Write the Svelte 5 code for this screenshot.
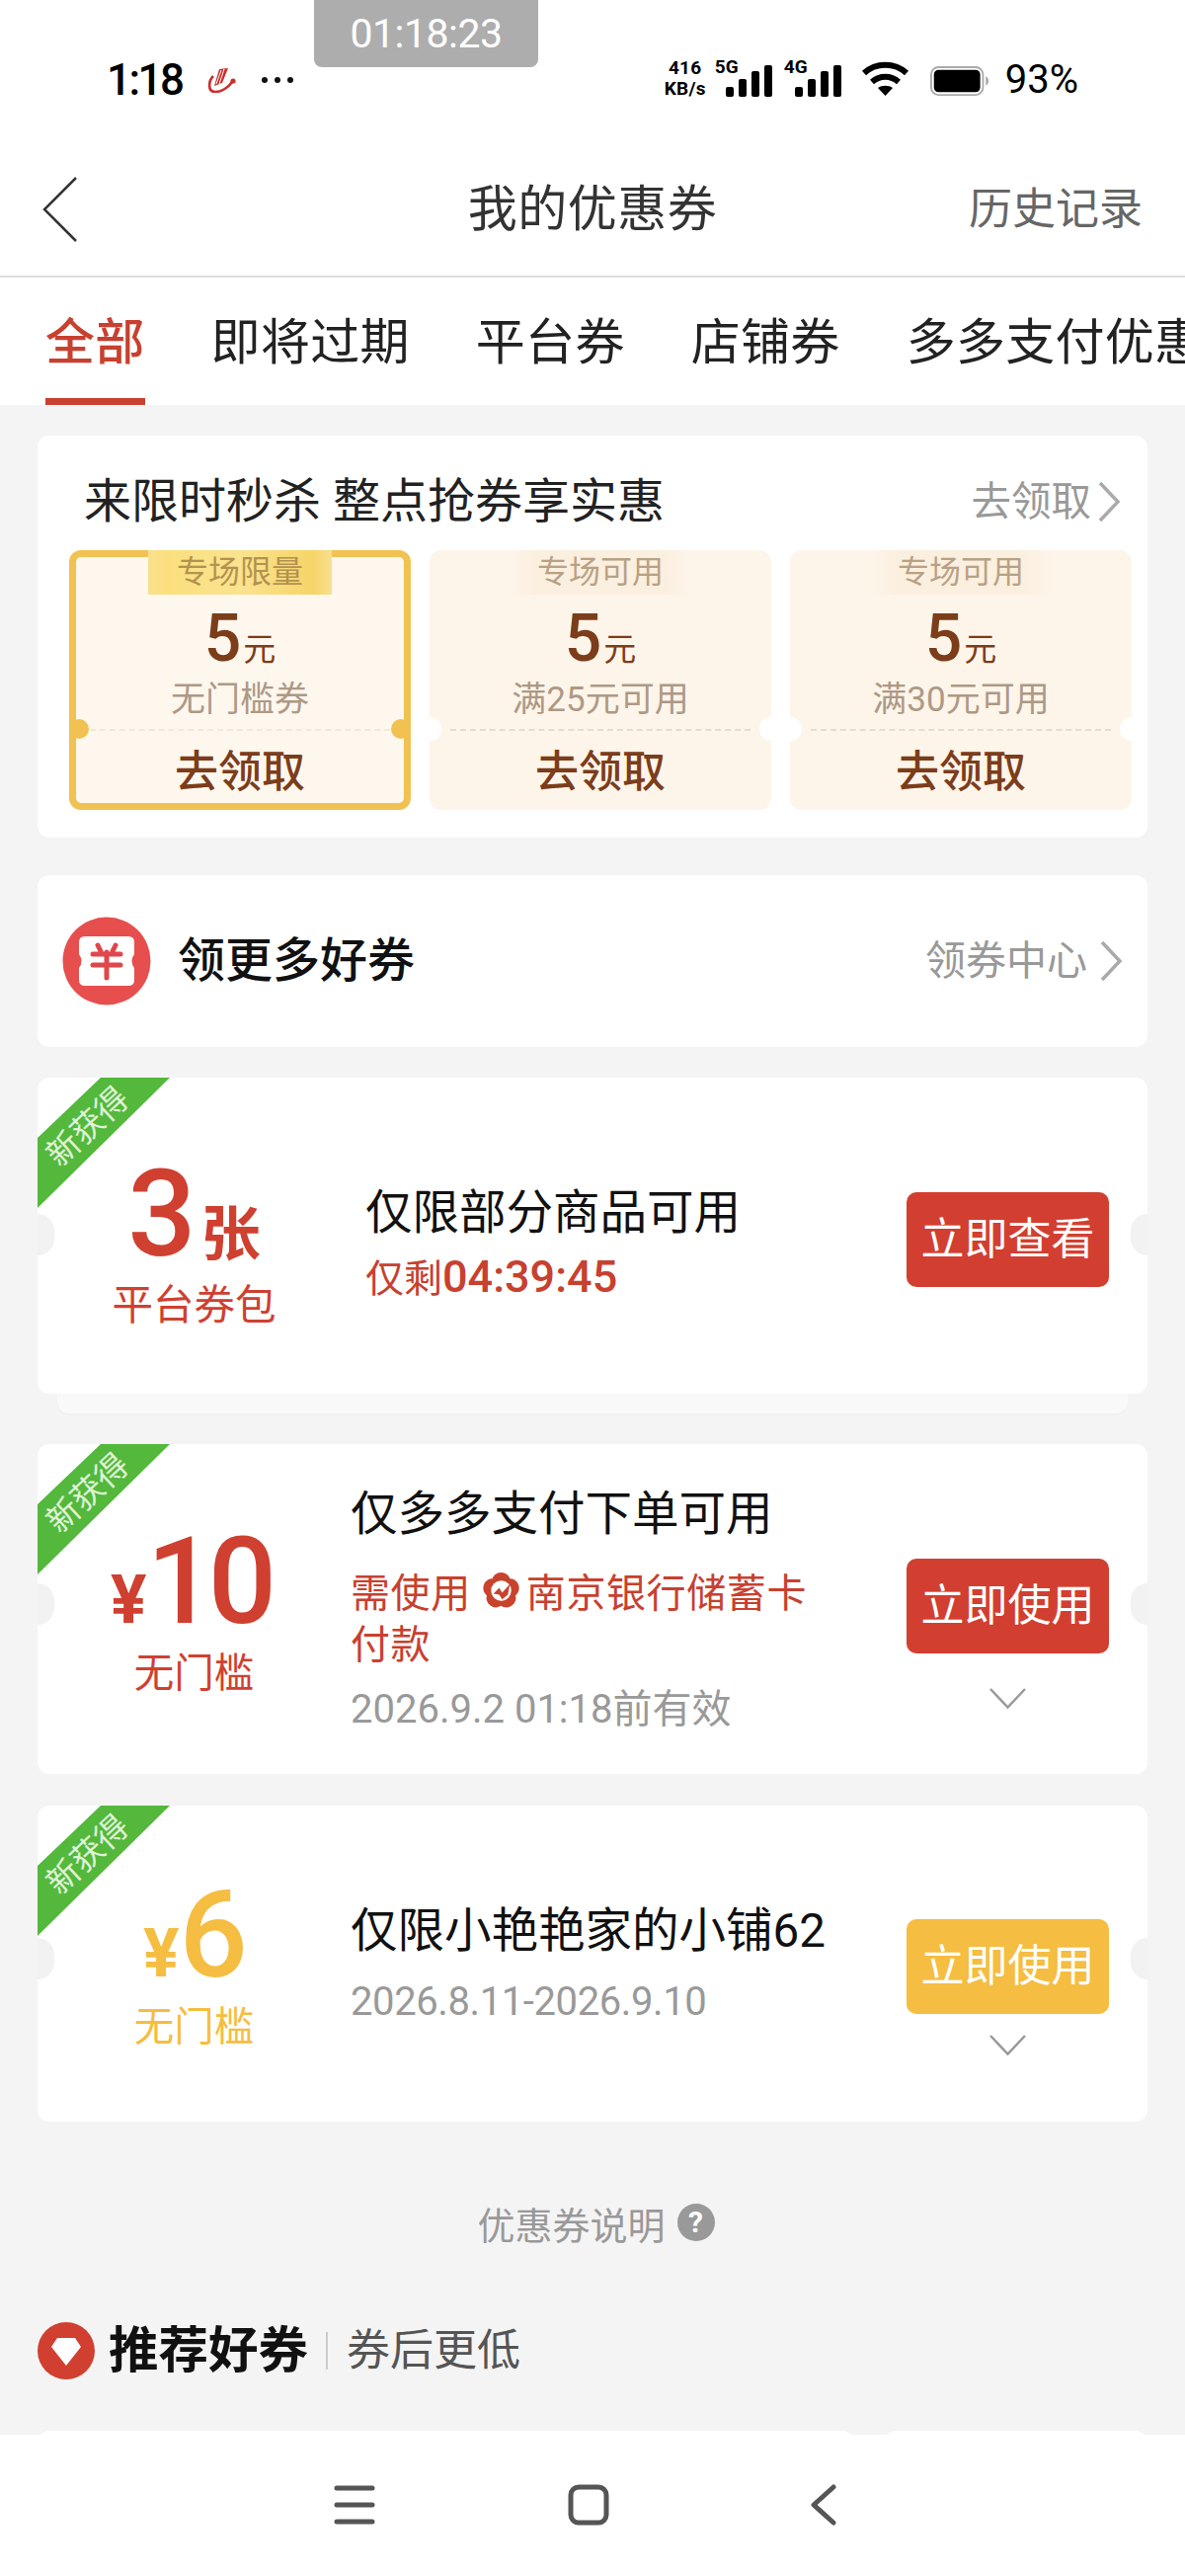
<script>
  const tabs = ["全部", "即将过期", "平台券", "店铺券", "多多支付优惠券"];

  const tickets = [
    { tag: "专场限量", label: "无门槛券", active: true },
    { tag: "专场可用", label: "满25元可用", active: false },
    { tag: "专场可用", label: "满30元可用", active: false }
  ];
</script>

{#snippet ribbon()}
  <div class="ribbon"><span>新获得</span></div>
{/snippet}

{#snippet chevronRight()}
  <svg class="chev-right" viewBox="0 0 24 42" fill="none">
    <path d="M3 2 L21 21 L3 40" stroke="#aaa" stroke-width="3.5" />
  </svg>
{/snippet}

{#snippet chevronDown()}
  <svg class="chev-down" viewBox="0 0 37 21" fill="none">
    <path d="M1 1 L18.5 19.5 L36 1" stroke="#999" stroke-width="2.5" />
  </svg>
{/snippet}

{#snippet bars()}
  <svg class="bars" viewBox="0 0 47 32">
    <rect x="0" y="22" width="8" height="10" rx="2" />
    <rect x="13" y="14" width="8" height="18" rx="2" />
    <rect x="26" y="6" width="8" height="26" rx="2" />
    <rect x="39" y="0" width="8" height="32" rx="2" />
  </svg>
{/snippet}

<div class="page">
  <!-- 状态栏 -->
  <div class="status">
    <div class="rec">01:18:23</div>
    <div class="status-left">
      <span class="time">1:18</span>
      <svg class="app-logo" viewBox="0 0 30 25" fill="none">
        <path d="M6 8 C1 13 0 24 8 24 C14 24 21 20 25 14" stroke="#c9302c" stroke-width="2.6" />
        <path d="M12 1 L21 0 L15 15 L7 18 Z" fill="#c9302c" />
        <path d="M14 2 L9 16 M17 1 L12 16" stroke="#fff" stroke-width="1" />
        <circle cx="26" cy="13" r="2.6" fill="#c9302c" />
      </svg>
      <span class="dots"><i></i><i></i><i></i></span>
    </div>
    <div class="status-right">
      <div class="speed"><span>416</span><span>KB/s</span></div>
      <div class="net"><span>5G</span>{@render bars()}</div>
      <div class="net"><span>4G</span>{@render bars()}</div>
      <svg class="wifi" viewBox="0 0 49 36" fill="none">
        <path d="M3 12 C15 1 34 1 46 12" stroke="#000" stroke-width="6" />
        <path d="M11 21 C19 14 30 14 38 21" stroke="#000" stroke-width="6" />
        <path d="M17 27 C21 24 28 24 32 27 L24.5 35 Z" fill="#000" />
      </svg>
      <svg class="battery" viewBox="0 0 64 32">
        <rect x="1" y="1" width="56" height="30" rx="8" fill="none" stroke="#aaa" stroke-width="2" />
        <rect x="4" y="4" width="50" height="24" rx="5" fill="#000" />
        <path d="M60 11 C62 12 63 14 63 16 C63 18 62 20 60 21 Z" fill="#aaa" />
      </svg>
      <span class="pct">93%</span>
    </div>
  </div>

  <!-- 标题栏 -->
  <header class="nav">
    <svg class="back" viewBox="0 0 36 66" fill="none">
      <path d="M34 1 L2 33 L34 65" stroke="#333" stroke-width="2.5" />
    </svg>
    <h1>我的优惠券</h1>
    <span class="history">历史记录</span>
  </header>

  <nav class="tabs">
    {#each tabs as tab, i}
      <span class="tab" class:on={i === 0}>{tab}</span>
    {/each}
  </nav>

  <main>
    <section class="card flash">
      <div class="flash-head">
        <span class="flash-title">来限时秒杀 整点抢券享实惠</span>
        <span class="more">去领取{@render chevronRight()}</span>
      </div>
      <div class="tickets">
        {#each tickets as t}
          <div class="ticket" class:active={t.active}>
            <div class="tag">{t.tag}</div>
            <div class="price"><b>5</b><span>元</span></div>
            <div class="cond">{t.label}</div>
            <div class="take">去领取</div>
          </div>
        {/each}
      </div>
    </section>

    <section class="card center-link">
      <svg class="ticket-icon" viewBox="0 0 90 90">
        <circle cx="45" cy="45" r="44.5" fill="#e64f4d" />
        <path d="M23 20 H67 Q73 20 73 26 V38 Q68 45 73 52 V64 Q73 70 67 70 H23 Q17 70 17 64 V52 Q22 45 17 38 V26 Q17 20 23 20 Z" fill="#fff" />
        <path d="M36 29 L39 35 M54 29 L51 35 M31 38 H59 M31 49 H59 M45 36 V62" stroke="#e0474a" stroke-width="5" stroke-linecap="round" fill="none" />
      </svg>
      <span class="center-title">领更多好券</span>
      <span class="more">领券中心{@render chevronRight()}</span>
    </section>

    <section class="coupon c1">
      {@render ribbon()}
      <div class="left red">
        <div class="amount"><b>3</b><em class="unit">张</em></div>
        <div class="label">平台券包</div>
      </div>
      <div class="mid">
        <div class="title">仅限部分商品可用</div>
        <div class="line countdown">仅剩<b>04:39:45</b></div>
      </div>
      <div class="right">
        <div class="btn">立即查看</div>
      </div>
    </section>
    <div class="stacked"></div>

    <section class="coupon c2">
      {@render ribbon()}
      <div class="left red">
        <div class="amount"><em class="cur">¥</em><b>10</b></div>
        <div class="label">无门槛</div>
      </div>
      <div class="mid">
        <div class="title">仅多多支付下单可用</div>
        <div class="line bank">需使用<svg class="flower" viewBox="0 0 40 40">
            {#each [0, 72, 144, 216, 288] as deg}
              <ellipse cx="20" cy="9.5" rx="9.5" ry="8.5" fill="#c9432c" transform="rotate({deg} 20 20)" />
            {/each}
            <circle cx="20" cy="20" r="10.5" fill="#fff" />
            <path d="M12 23 L18 17 L21 22 L29 13 L27 24 L21 29 L18 24 Z" fill="#c9432c" />
          </svg>南京银行储蓄卡付款</div>
        <div class="date">2026.9.2 01:18前有效</div>
      </div>
      <div class="right">
        <div class="btn">立即使用</div>
        {@render chevronDown()}
      </div>
    </section>

    <section class="coupon c3">
      {@render ribbon()}
      <div class="left yellow">
        <div class="amount"><em class="cur">¥</em><b>6</b></div>
        <div class="label">无门槛</div>
      </div>
      <div class="mid">
        <div class="title">仅限小艳艳家的小铺62</div>
        <div class="date">2026.8.11-2026.9.10</div>
      </div>
      <div class="right">
        <div class="btn">立即使用</div>
        {@render chevronDown()}
      </div>
    </section>

    <div class="explain">
      优惠券说明
      <span class="help">?</span>
    </div>

    <div class="rec-head">
      <svg class="gem" viewBox="0 0 58 58">
        <circle cx="29" cy="29" r="29" fill="#d13f30" />
        <path d="M20 16 H38 L44 25 L29 44 L14 25 Z" fill="#fff" />
      </svg>
      <strong>推荐好券</strong>
      <i></i>
      <span>券后更低</span>
    </div>

    <div class="peek"><div></div><div></div></div>
  </main>

  <footer class="softkeys">
    <svg viewBox="0 0 42 42" fill="none" stroke="#555" stroke-width="5" stroke-linecap="round">
      <path d="M3 4 H39 M3 21 H39 M3 38 H39" />
    </svg>
    <svg viewBox="0 0 42 42" fill="none" stroke="#555" stroke-width="5">
      <rect x="3" y="3" width="36" height="36" rx="8" />
    </svg>
    <svg viewBox="0 0 42 42" fill="none" stroke="#555" stroke-width="5" stroke-linecap="round" stroke-linejoin="round">
      <path d="M32 3 L12 21 L32 39" />
    </svg>
  </footer>
</div>

<style>
  :global(body) {
    margin: 0;
    background: #fff;
  }
  .page {
    width: 1200px;
    height: 2608px;
    display: flex;
    flex-direction: column;
    overflow: hidden;
    position: relative;
    background: #f4f4f4;
    color: #222;
    font-family: Roboto, "Noto Sans CJK SC", sans-serif;
  }

  /* 状态栏 */
  .status {
    height: 150px;
    flex: none;
    background: #fff;
    display: flex;
    justify-content: space-between;
    align-items: flex-start;
    padding: 58px 108px 0 108px;
    box-sizing: border-box;
    color: #000;
  }
  .rec {
    position: absolute;
    left: 318px;
    top: 0;
    width: 227px;
    height: 68px;
    border-radius: 0 0 8px 8px;
    background: #adadad;
    color: #fff;
    font-size: 41px;
    line-height: 68px;
    text-align: center;
    letter-spacing: -0.5px;
  }
  .status-left {
    display: flex;
    align-items: center;
    height: 46px;
  }
  .time {
    font-size: 44px;
    font-weight: 500;
    line-height: 46px;
    letter-spacing: -2.5px;
  }
  .app-logo {
    width: 30px;
    height: 25px;
    margin-left: 25px;
  }
  .dots {
    display: flex;
    gap: 7px;
    margin-left: 25px;
  }
  .dots i {
    width: 6px;
    height: 6px;
    border-radius: 50%;
    background: #111;
  }
  .status-right {
    display: flex;
    align-items: flex-end;
    height: 40px;
  }
  .speed {
    display: flex;
    flex-direction: column;
    align-items: center;
    width: 48px;
    font-size: 19px;
    font-weight: 700;
    line-height: 21px;
    letter-spacing: 0.3px;
    margin-bottom: -2px;
  }
  .net {
    display: flex;
    align-items: flex-end;
    margin-left: 6px;
    position: relative;
    width: 58px;
    height: 40px;
    justify-content: flex-end;
  }
  .net + .net {
    margin-left: 12px;
  }
  .net span {
    position: absolute;
    left: 0;
    top: 0;
    font-size: 19px;
    font-weight: 700;
    line-height: 20px;
  }
  .bars {
    width: 47px;
    height: 32px;
    fill: #000;
  }
  .wifi {
    width: 49px;
    height: 36px;
    margin-left: 20px;
  }
  .battery {
    width: 60px;
    height: 32px;
    margin-left: 21px;
  }
  .pct {
    font-size: 40px;
    line-height: 40px;
    margin-left: 16px;
    margin-bottom: -3px;
  }

  /* 标题栏 */
  .nav {
    height: 131px;
    flex: none;
    box-sizing: border-box;
    background: #fff;
    border-bottom: 2px solid #ddd;
    display: grid;
    grid-template-columns: 1fr auto 1fr;
    align-items: center;
    padding: 0 43px 5px;
  }
  .back {
    width: 36px;
    height: 66px;
  }
  h1 {
    margin: 0;
    font-size: 50px;
    font-weight: 400;
    line-height: 60px;
    letter-spacing: 0.5px;
    color: #333;
  }
  .history {
    justify-self: end;
    font-size: 44px;
    line-height: 60px;
    color: #666;
  }
  .tabs {
    height: 129px;
    flex: none;
    background: #fff;
    display: flex;
    gap: 67px;
    padding-left: 46px;
    white-space: nowrap;
    overflow: hidden;
  }
  .tab {
    position: relative;
    font-size: 50px;
    line-height: 132px;
    letter-spacing: 0.3px;
    color: #222;
  }
  .tab.on {
    color: #c8402f;
    font-weight: 500;
  }
  .tab.on::after {
    content: "";
    position: absolute;
    left: 0;
    right: 0;
    bottom: 0;
    height: 7px;
    background: #c8402f;
  }

  main {
    flex: 1;
    min-height: 0;
    overflow: hidden;
    padding: 31px 38px 0;
    display: flex;
    flex-direction: column;
  }
  .card {
    background: #fff;
    border-radius: 12px;
    flex: none;
  }

  /* 限时秒杀 */
  .flash {
    height: 407px;
    box-sizing: border-box;
    padding: 0 32px;
    margin-bottom: 38px;
  }
  .flash-head {
    height: 116px;
    display: flex;
    justify-content: space-between;
    align-items: center;
    padding: 17px 0 0 15px;
    box-sizing: border-box;
  }
  .flash-title {
    font-size: 48px;
    line-height: 60px;
    color: #222;
  }
  .more {
    display: flex;
    align-items: center;
    gap: 6px;
    font-size: 40.5px;
    line-height: 50px;
    color: #999;
  }
  .flash-head .more {
    margin-right: -5px;
  }
  .center-link .more {
    gap: 12px;
    font-size: 41px;
  }
  .chev-right {
    width: 24px;
    height: 42px;
  }
  .tickets {
    display: grid;
    grid-template-columns: repeat(3, 346px);
    gap: 19px;
  }
  .ticket {
    position: relative;
    height: 263px;
    display: flex;
    flex-direction: column;
    align-items: center;
    background: #fdf5ea;
    border-radius: 12px;
    color: #7c3d1a;
  }
  .ticket.active {
    background: #fef7ee;
    box-shadow: inset 0 0 0 7px #f1c252;
  }
  .tag {
    width: 186px;
    height: 45px;
    font-size: 32px;
    line-height: 44px;
    text-align: center;
    color: #b8a184;
    background: linear-gradient(90deg, #fdf5ea, #fbefdf 15%, #fbefdf 85%, #fdf5ea);
  }
  .active .tag {
    background: linear-gradient(90deg, #f8e08f, #fbdf7e 10%, #fbe38f 50%, #f6d468 90%, #f8e08f);
    color: #b3924f;
  }
  .price {
    height: 80px;
    margin-top: 5px;
    display: flex;
    align-items: baseline;
    line-height: 80px;
  }
  .price b {
    font-size: 66px;
    font-weight: 500;
  }
  .price span {
    font-size: 33px;
    margin-left: 2px;
  }
  .cond {
    font-size: 35px;
    line-height: 50px;
    color: #ae9985;
    margin-top: -3px;
  }
  .take {
    margin: 4px 21px 0;
    height: 82px;
    align-self: stretch;
    text-align: center;
    font-size: 44px;
    font-weight: 500;
    line-height: 84px;
    border-top: 2px dashed #e9dccb;
    box-sizing: border-box;
  }
  .active .take {
    border-top-color: #f3e8d8;
  }
  .ticket::before,
  .ticket::after {
    content: "";
    position: absolute;
    top: 169px;
    width: 24px;
    height: 24px;
    border-radius: 50%;
    background: #fff;
  }
  .ticket::before {
    left: -12px;
  }
  .ticket::after {
    right: -12px;
  }
  .active::before,
  .active::after {
    background: #f1c252;
    width: 20px;
    height: 20px;
    top: 171px;
  }
  .active::before {
    left: 0;
  }
  .active::after {
    right: 0;
  }

  /* 领券中心 */
  .center-link {
    height: 174px;
    margin-bottom: 31px;
    display: flex;
    align-items: center;
    padding: 0 25px;
    box-sizing: border-box;
  }
  .ticket-icon {
    width: 90px;
    height: 90px;
    flex: none;
  }
  .center-title {
    margin-left: 27px;
    font-size: 48px;
    font-weight: 500;
    line-height: 60px;
    color: #111;
    flex: 1;
  }

  /* 优惠券 */
  .coupon {
    position: relative;
    flex: none;
    display: grid;
    grid-template-columns: 317px 1fr 244px;
    align-items: start;
    background: #fff;
    border-radius: 12px;
    overflow: hidden;
  }
  .coupon::before,
  .coupon::after {
    content: "";
    position: absolute;
    top: var(--notch);
    width: 17px;
    height: 42px;
    margin-top: -21px;
    background: #f2f2f2;
  }
  .coupon::before {
    left: 0;
    border-radius: 0 21px 21px 0;
  }
  .coupon::after {
    right: 0;
    border-radius: 21px 0 0 21px;
  }
  .c1 {
    height: 320px;
    --notch: 159px;
    --left: 89px;
    --mid: 107px;
  }
  .c2 {
    height: 334px;
    margin-bottom: 32px;
    --notch: 162px;
    --left: 90px;
    --mid: 41px;
  }
  .c3 {
    height: 320px;
    --notch: 155px;
    --left: 82px;
    --mid: 97px;
  }
  .stacked {
    flex: none;
    height: 20px;
    margin: 0 20px 31px;
    background: #f9f9f9;
    border-radius: 0 0 12px 12px;
    box-shadow: 0 2px 3px rgba(0, 0, 0, 0.02);
  }
  .ribbon {
    position: absolute;
    left: 0;
    top: 0;
    width: 134px;
    height: 132px;
    background: #53b83c;
    clip-path: polygon(64px 0, 134px 0, 0 132px, 0 61px);
  }
  .ribbon span {
    position: absolute;
    left: 51px;
    top: 50px;
    transform: translate(-50%, -50%) rotate(-43deg);
    font-size: 33px;
    line-height: 40px;
    color: #dff3d6;
    white-space: nowrap;
  }
  .left {
    padding-top: var(--left);
    display: flex;
    flex-direction: column;
    align-items: center;
  }
  .red {
    color: #cf4031;
  }
  .yellow {
    color: #f5bd41;
  }
  .amount {
    height: 100px;
    display: flex;
    align-items: baseline;
    line-height: 100px;
  }
  .c2 .amount {
    padding-right: 8px;
  }
  .c3 .amount {
    padding-right: 4px;
  }
  .amount b {
    font-size: 122px;
    font-weight: 500;
    letter-spacing: -7px;
  }
  .amount em {
    font-style: normal;
    font-weight: 700;
  }
  .unit {
    font-size: 60px;
    margin-left: 12px;
  }
  .cur {
    font-size: 68px;
  }
  .left .label {
    margin-top: 17px;
    font-size: 40.5px;
    line-height: 50px;
  }
  .c1 .left .label {
    font-size: 41.5px;
  }
  .mid {
    padding: var(--mid) 60px 0 0;
  }
  .c1 .mid {
    padding-left: 15px;
  }
  .c2 .mid {
    padding-right: 70px;
  }
  .title {
    font-size: 47.5px;
    line-height: 60px;
    color: #111;
    white-space: nowrap;
  }
  .line {
    font-size: 40px;
    line-height: 52px;
    color: #c8402f;
  }
  .countdown {
    margin-top: 9px;
    font-size: 39px;
  }
  .countdown b {
    font-size: 45px;
    font-weight: 500;
  }
  .bank {
    margin-top: 25px;
    letter-spacing: 0.6px;
  }
  .flower {
    width: 39px;
    height: 39px;
    margin: 0 6px 0 11px;
    vertical-align: -3px;
  }
  .date {
    margin-top: 13px;
    font-size: 40px;
    line-height: 52px;
    color: #999;
    white-space: nowrap;
  }
  .c3 .date {
    margin-top: 16px;
    letter-spacing: -0.4px;
  }
  .right {
    padding: 116px 39px 0 0;
    display: flex;
    flex-direction: column;
    align-items: center;
  }
  .c3 .right {
    padding-top: 115px;
  }
  .btn {
    width: 205px;
    height: 96px;
    border-radius: 10px;
    background: #d23f31;
    color: #fff;
    font-size: 44px;
    line-height: 96px;
    text-align: center;
  }
  .c3 .btn {
    background: #f5bd41;
  }
  .chev-down {
    width: 37px;
    height: 21px;
    margin-top: 35px;
  }
  .c3 .chev-down {
    margin-top: 21px;
  }

  /* 说明 */
  .explain {
    flex: none;
    margin-top: 77px;
    display: flex;
    justify-content: center;
    align-items: center;
    gap: 12px;
    padding-left: 7px;
    height: 50px;
    font-size: 38px;
    color: #999;
  }
  .help {
    width: 38px;
    height: 38px;
    border-radius: 50%;
    background: #999;
    color: #fff;
    font-size: 30px;
    font-weight: 700;
    line-height: 38px;
    text-align: center;
  }
  .rec-head {
    flex: none;
    margin-top: 75px;
    height: 60px;
    display: flex;
    align-items: center;
  }
  .gem {
    width: 58px;
    height: 58px;
  }
  .rec-head strong {
    margin-left: 14px;
    font-size: 50.5px;
    font-weight: 700;
    line-height: 60px;
    color: #111;
  }
  .rec-head i {
    width: 2px;
    height: 38px;
    margin: 0 19px 0 18px;
    background: #ccc;
  }
  .rec-head span {
    font-size: 44px;
    line-height: 60px;
    color: #555;
  }
  .peek {
    flex: none;
    margin-top: 51px;
    height: 40px;
    display: flex;
    gap: 30px;
  }
  .peek div {
    flex: 827;
    background: #fff;
    border-radius: 12px 12px 0 0;
  }
  .peek div + div {
    flex: 267;
  }

  .softkeys {
    height: 143px;
    flex: none;
    background: #fff;
    display: grid;
    grid-template-columns: repeat(3, 42px);
    justify-content: center;
    column-gap: 195px;
    padding: 50px 9px 0 0;
    box-sizing: border-box;
  }
  .softkeys svg {
    width: 42px;
    height: 42px;
  }
</style>
